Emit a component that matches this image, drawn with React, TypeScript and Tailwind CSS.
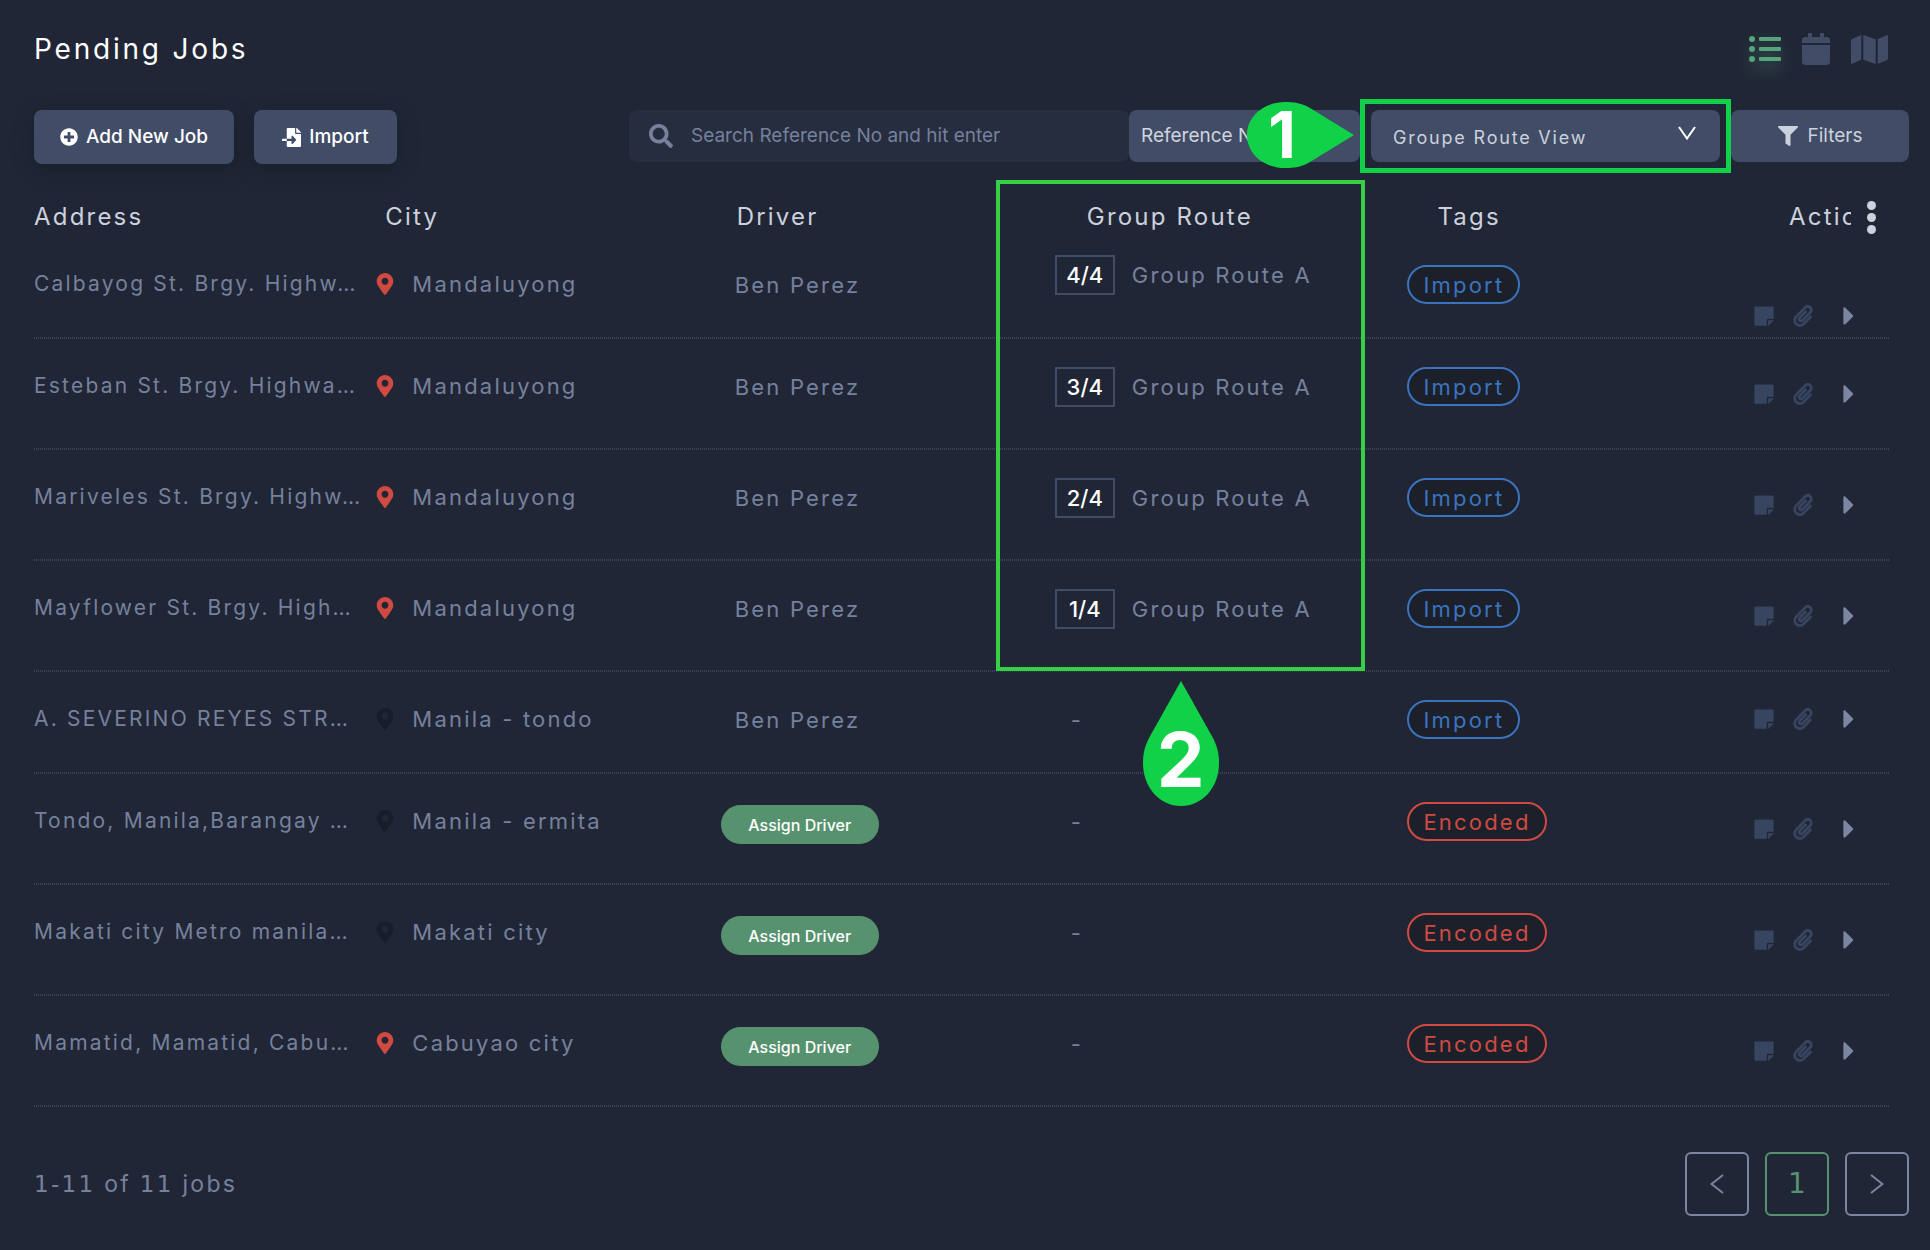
import {
  FaCalendar,
  FaCaretRight,
  FaFileImport,
  FaFilter,
  FaListUl,
  FaMap,
  FaMapMarkerAlt,
  FaPaperclip,
  FaPlusCircle,
  FaSearch,
  FaStickyNote,
} from "react-icons/fa";

type Job = {
  id: number;
  address: string;
  city: string;
  located: boolean;
  driver: string | null;
  stop: string | null;
  route: string | null;
  tag: "Import" | "Encoded";
};

const jobs: Job[] = [
  { id: 1, address: "Calbayog St. Brgy. Highw…", city: "Mandaluyong", located: true, driver: "Ben Perez", stop: "4/4", route: "Group Route A", tag: "Import" },
  { id: 2, address: "Esteban St. Brgy. Highwa…", city: "Mandaluyong", located: true, driver: "Ben Perez", stop: "3/4", route: "Group Route A", tag: "Import" },
  { id: 3, address: "Mariveles St. Brgy. Highw…", city: "Mandaluyong", located: true, driver: "Ben Perez", stop: "2/4", route: "Group Route A", tag: "Import" },
  { id: 4, address: "Mayflower St. Brgy. High…", city: "Mandaluyong", located: true, driver: "Ben Perez", stop: "1/4", route: "Group Route A", tag: "Import" },
  { id: 5, address: "A. SEVERINO REYES STR…", city: "Manila - tondo", located: false, driver: "Ben Perez", stop: null, route: null, tag: "Import" },
  { id: 6, address: "Tondo, Manila,Barangay …", city: "Manila - ermita", located: false, driver: null, stop: null, route: null, tag: "Encoded" },
  { id: 7, address: "Makati city Metro manila…", city: "Makati city", located: false, driver: null, stop: null, route: null, tag: "Encoded" },
  { id: 8, address: "Mamatid, Mamatid, Cabu…", city: "Cabuyao city", located: true, driver: null, stop: null, route: null, tag: "Encoded" },
];

function ViewSwitcher() {
  return (
    <div className="flex items-center gap-[19px] text-[#414d67]">
      <button type="button" aria-label="List view" className="text-[#56a37c] drop-shadow-[0_8px_8px_rgba(86,163,124,0.45)]">
        <FaListUl size={32} />
      </button>
      <button type="button" aria-label="Calendar view">
        <FaCalendar size={32} />
      </button>
      <button type="button" aria-label="Map view">
        <FaMap size={37} />
      </button>
    </div>
  );
}

function Toolbar() {
  return (
    <div className="mt-10 flex items-start pr-[21px] text-[19px]">
      <button
        type="button"
        className="flex h-[54px] w-[200px] items-center justify-center gap-2 rounded-lg bg-[#414d67] font-medium text-white shadow-[0_6px_24px_rgba(0,0,0,0.2)]"
      >
        <FaPlusCircle size={18} />
        Add New Job
      </button>
      <button
        type="button"
        className="ml-5 flex h-[54px] w-[143px] items-center justify-center gap-2 rounded-lg bg-[#414d67] font-medium text-white shadow-[0_6px_24px_rgba(0,0,0,0.2)]"
      >
        <FaFileImport size={19} />
        Import
      </button>

      <div className="ml-auto flex h-[52px]">
        <label className="flex w-[500px] items-center gap-[18px] rounded-lg bg-[#252d3f] pl-5 text-[#76819d]">
          <FaSearch size={24} />
          <input
            type="text"
            aria-label="Search jobs"
            placeholder="Search Reference No and hit enter"
            className="min-w-0 flex-1 bg-transparent outline-none placeholder:text-[#76819d]"
          />
        </label>
        <select aria-label="Search field" className="w-[231px] appearance-none rounded-lg bg-[#414d67] pl-3 text-[#d0d5df]">
          <option>Reference No</option>
        </select>
        <div className="relative mx-[11px]">
          <select
            aria-label="View"
            className="h-full w-[349px] appearance-none rounded-lg bg-[#414d67] pt-1 pl-[22px] text-lg tracking-widest text-[#ccd1dc]"
          >
            <option>Groupe Route View</option>
          </select>
          <svg viewBox="0 0 18 14" className="pointer-events-none absolute top-4 right-6 h-[14px] w-[18px]" fill="none" stroke="#fff" strokeWidth="2">
            <path d="M1 1l8 11.5L17 1" />
          </svg>
          <div className="pointer-events-none absolute -inset-[11px] border-[5px] border-[#11d148]" />
          <div className="pointer-events-none absolute -top-2 right-full mr-[17px] flex h-[66px] w-[107px] items-center">
            <svg viewBox="0 0 107 66" className="absolute inset-0 h-full w-full" fill="#11d148">
              <path d="M107 33L63 6C55 1 47 0 38 0C17 0 0 14 0 33s17 33 38 33c9 0 17-1 25-6z" />
            </svg>
            <span className="relative w-[70px] text-center text-[64px] leading-none font-bold text-white">1</span>
          </div>
        </div>
        <button type="button" className="flex w-[178px] items-center justify-center gap-[10px] rounded-lg bg-[#414d67] text-[#ccd1dc]">
          <FaFilter size={20} />
          Filters
        </button>
      </div>
    </div>
  );
}

function RouteCallout() {
  return (
    <div className="pointer-events-none absolute -top-[17px] right-[42px] -left-[59px] h-[491px] border-4 border-[#36cf45]">
      <div className="absolute top-full left-1/2 mt-[14px] flex h-[125px] w-[76px] -translate-x-1/2 justify-center">
        <svg viewBox="0 0 76 125" className="absolute inset-0 h-full w-full" fill="#11d148">
          <path d="M38 0L6 57C2 65 0 72 0 82c0 25 17 43 38 43s38-18 38-43c0-10-2-17-6-25z" />
        </svg>
        <span className="relative pt-10 text-[76px] leading-none font-bold tracking-normal text-white">2</span>
      </div>
    </div>
  );
}

function TagPill({ tag }: { tag: Job["tag"] }) {
  return (
    <span
      className={
        tag === "Import"
          ? "inline-flex h-[39px] items-center rounded-[20px] border-2 border-[#3b73bf] bg-[#1b202b] px-[14px] text-[#3b73bf]"
          : "inline-flex h-[39px] items-center rounded-[20px] border-2 border-[#d14a42] bg-[#1b202b] px-[14px] text-[#d14a42]"
      }
    >
      {tag}
    </span>
  );
}

function JobRow({ job, first }: { job: Job; first: boolean }) {
  return (
    <tr
      className={`bg-[repeating-linear-gradient(90deg,#3a4253_0_1px,transparent_1px_2px)] bg-[length:100%_2px] bg-bottom bg-no-repeat ${
        first || job.id === 5 ? "h-[102px]" : "h-[111px]"
      }`}
    >
      <td className="pt-8 text-[21px] whitespace-nowrap">{job.address}</td>
      <td className="pt-8">
        <div className="flex items-center">
          <FaMapMarkerAlt size={22} className={job.located ? "-ml-[3px] text-[#d14a42]" : "-ml-[3px] text-[#171d29]"} />
          <span className="pl-4">{job.city}</span>
        </div>
      </td>
      <td className="pt-7">
        {job.driver ? (
          <div className="flex h-10 items-center pl-[14px]">{job.driver}</div>
        ) : (
          <button type="button" className="mt-[3px] block h-[39px] w-[158px] rounded-[20px] bg-[#57926f] text-base font-medium tracking-normal text-white">
            Assign Driver
          </button>
        )}
      </td>
      <td className={first ? "pt-[18px]" : "pt-7"}>
        <div className="flex h-10 items-center">
          {job.route ? (
            <>
              <span className="flex h-10 w-[60px] items-center justify-center border-2 border-[#414d67] font-medium tracking-normal text-white">
                {job.stop}
              </span>
              <span className="pl-[17px]">{job.route}</span>
            </>
          ) : (
            <span className="pl-4">-</span>
          )}
        </div>
      </td>
      <td className="pt-7">
        <div className="flex">
          <TagPill tag={job.tag} />
        </div>
      </td>
      <td className={first ? "pt-16" : job.id === 5 ? "pt-8" : "pt-10"}>
        <div className="flex h-[30px] items-center text-[#374560]">
          <button type="button" aria-label="Notes">
            <FaStickyNote size={22} />
          </button>
          <button type="button" aria-label="Attachments" className="ml-[17px]">
            <FaPaperclip size={22} />
          </button>
          <button type="button" aria-label="Open job" className="ml-5 text-[#7b86a3]">
            <FaCaretRight size={30} />
          </button>
        </div>
      </td>
    </tr>
  );
}

function JobsTable() {
  return (
    <table className="mt-[33px] w-full table-fixed border-collapse text-left text-[22px] leading-[30px] tracking-widest text-[#76819d] [&_td]:align-top">
      <thead>
        <tr className="h-10 text-2xl text-[#ccd1dc] [&>th]:p-0 [&>th]:font-normal">
          <th className="w-[18.5%]">Address</th>
          <th className="w-[18.5%]">
            <span className="pl-2">City</span>
          </th>
          <th className="w-[18%]">
            <span className="pl-4">Driver</span>
          </th>
          <th className="relative w-[19%]">
            <span className="pl-8">Group Route</span>
            <RouteCallout />
          </th>
          <th>
            <span className="pl-[30px]">Tags</span>
          </th>
          <th className="w-[137px]">
            <div className="flex items-center pl-9">
              <span className="w-[62px] overflow-hidden">Action</span>
              <button type="button" aria-label="Choose columns" className="ml-4 flex flex-col gap-[3px]">
                <span className="size-[9px] rounded-full bg-[#ccd1dc]" />
                <span className="size-[9px] rounded-full bg-[#ccd1dc]" />
                <span className="size-[9px] rounded-full bg-[#ccd1dc]" />
              </button>
            </div>
          </th>
        </tr>
      </thead>
      <tbody>
        {jobs.map((job, index) => (
          <JobRow key={job.id} job={job} first={index === 0} />
        ))}
      </tbody>
    </table>
  );
}

function Pagination() {
  return (
    <footer className="mt-[45px] flex items-center justify-between pr-[21px] text-[#76819d]">
      <p className="text-[23px] leading-8 tracking-widest">
        <span className="font-['DejaVu_Sans',sans-serif]">1-11</span> of <span className="font-['DejaVu_Sans',sans-serif]">11</span> jobs
      </p>
      <nav aria-label="Pages" className="flex gap-4">
        <button type="button" aria-label="Previous page" className="flex size-16 items-center justify-center rounded-md border-2 border-[#7b86a3]">
          <svg viewBox="0 0 14 20" className="h-5 w-[14px]" fill="none" stroke="#7b86a3" strokeWidth="2">
            <path d="M13 1L1.500 10L13 19" />
          </svg>
        </button>
        <button
          type="button"
          aria-current="page"
          className="size-16 rounded-md border-2 border-[#57926f] font-['DejaVu_Sans',sans-serif] text-[28px] text-[#57926f]"
        >
          1
        </button>
        <button type="button" aria-label="Next page" className="flex size-16 items-center justify-center rounded-md border-2 border-[#7b86a3]">
          <svg viewBox="0 0 14 20" className="h-5 w-[14px]" fill="none" stroke="#7b86a3" strokeWidth="2">
            <path d="M1 1L12.500 10L1 19" />
          </svg>
        </button>
      </nav>
    </footer>
  );
}

export default function App() {
  return (
    <main className="min-h-screen bg-[#202635] pt-7 pb-8 pl-[34px] font-[Inter,'Liberation_Sans',sans-serif]">
      <header className="flex items-center justify-between pr-[42px]">
        <h1 className="text-[28px] tracking-widest text-white">Pending Jobs</h1>
        <ViewSwitcher />
      </header>
      <Toolbar />
      <div className="pr-10">
        <JobsTable />
      </div>
      <Pagination />
    </main>
  );
}
